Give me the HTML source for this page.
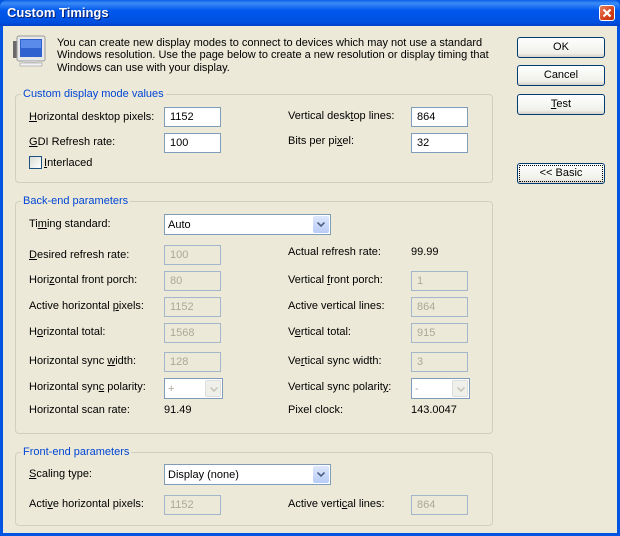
<!DOCTYPE html>
<html><head><meta charset="utf-8"><style>
*{margin:0;padding:0;box-sizing:border-box}
body{width:620px;height:536px;overflow:hidden;background:#0054E3;font-family:"Liberation Sans",Tahoma,sans-serif;font-size:11px;color:#000;position:relative}
.title{position:absolute;left:0;top:0;width:620px;height:26px;background:linear-gradient(#0A5FE8 0%,#3B8CF7 12%,#0058EE 40%,#0050E0 85%,#0040C8 100%);border-radius:7px 7px 0 0}
.title span{position:absolute;left:7px;top:5px;color:#fff;font-weight:bold;font-size:13px;text-shadow:1px 1px #0a1f6b}
.close{position:absolute;left:599px;top:5px;width:16px;height:16px;border:1px solid #fff;border-radius:3px;background:linear-gradient(135deg,#E8805A,#D4401C 60%,#C0300E)}
.close svg{position:absolute;left:2px;top:2px}
.client{position:absolute;left:3px;top:26px;width:614px;height:507px;background:#ECE9D8}
.a{position:absolute;white-space:nowrap;line-height:13px}
.grp{position:absolute;border:1px solid #D0D0BF;border-radius:4px}
.leg{position:absolute;color:#0046D5;background:#ECE9D8;padding:0 2px;line-height:13px}
.in{position:absolute;width:57px;height:20px;border:1px solid #7F9DB9;background:#fff;padding:3px 0 0 5px;line-height:13px}
.dis{background:#ECE9D8;color:#ACA899;border-color:#A4B6C9}
.sel{position:absolute;height:21px;border:1px solid #7F9DB9;background:#fff;padding:4px 0 0 3px;line-height:13px}
.arr{position:absolute;right:1px;top:1px;width:16px;height:17px;background:linear-gradient(#DDE8FD,#B9CCF7);border-radius:2px}
.arr svg{position:absolute;left:4px;top:6px}
.btn{position:absolute;left:517px;width:88px;height:21px;border:1px solid #003C74;border-radius:3px;background:linear-gradient(#FFFFFF,#F0F0EA 80%,#D6D0C5);text-align:center;line-height:19px}
u{text-decoration:underline}
</style></head><body>
<div class="title"><span>Custom Timings</span>
<div class="close"><svg width="10" height="10" viewBox="0 0 10 10"><path d="M1.5 1.5L8.5 8.5M8.5 1.5L1.5 8.5" stroke="#fff" stroke-width="2.2"/></svg></div></div>
<div class="client"></div>
<!-- monitor icon -->
<svg style="position:absolute;left:12px;top:34px" width="36" height="34" viewBox="0 0 36 34">
<rect x="1" y="7" width="6" height="17" fill="#6a6a6a" />
<rect x="5" y="2" width="28" height="25" rx="2" fill="#E8E8E8" stroke="#9a9a9a"/>
<rect x="8" y="5" width="22" height="18" fill="#2F62CF"/>
<rect x="9" y="6" width="20" height="8" fill="#5A8BEA"/>
<rect x="12" y="27" width="14" height="2" fill="#CFCFCF"/>
<rect x="8" y="29" width="22" height="3" fill="#F2F2F2" stroke="#999" stroke-width=".6"/>
</svg>
<div class="a" style="left:57px;top:37px">You can create new display modes to connect to devices which may not use a standard</div>
<div class="a" style="left:57px;top:49px">Windows resolution. Use the page below to create a new resolution or display timing that</div>
<div class="a" style="left:57px;top:62px">Windows can use with your display.</div>

<div class="btn" style="top:37px">OK</div>
<div class="btn" style="top:65px">Cancel</div>
<div class="btn" style="top:94px"><u>T</u>est</div>
<div class="btn" style="top:163px;outline:1px dotted #000;outline-offset:-3px">&lt;&lt; Basic</div>

<div class="grp" style="left:15px;top:94px;width:478px;height:89px"></div>
<div class="leg" style="left:21px;top:88px">Custom display mode values</div>
<div class="a" style="left:29px;top:111px"><u>H</u>orizontal desktop pixels:</div>
<div class="in" style="left:164px;top:107px">1152</div>
<div class="a" style="left:288px;top:110px">Vertical desk<u>t</u>op lines:</div>
<div class="in" style="left:411px;top:107px">864</div>
<div class="a" style="left:29px;top:136px"><u>G</u>DI Refresh rate:</div>
<div class="in" style="left:164px;top:133px">100</div>
<div class="a" style="left:288px;top:135px">Bits per pi<u>x</u>el:</div>
<div class="in" style="left:411px;top:133px">32</div>
<div style="position:absolute;left:29px;top:156px;width:13px;height:13px;border:1px solid #1C5180;background:linear-gradient(135deg,#DCDCD5,#fff)"></div>
<div class="a" style="left:44px;top:157px"><u>I</u>nterlaced</div>

<div class="grp" style="left:15px;top:201px;width:478px;height:233px"></div>
<div class="leg" style="left:21px;top:195px">Back-end parameters</div>
<div class="a" style="left:29px;top:218px">Ti<u>m</u>ing standard:</div>
<div class="sel" style="left:164px;top:214px;width:167px">Auto<div class="arr"><svg width="8" height="5"><path d="M0.5 0.5L4 4L7.5 0.5" stroke="#4D6185" stroke-width="1.6" fill="none"/></svg></div></div>

<div class="a" style="left:29px;top:249px"><u>D</u>esired refresh rate:</div>
<div class="in dis" style="left:164px;top:245px">100</div>
<div class="a" style="left:288px;top:246px">Actual refresh rate:</div>
<div class="a" style="left:411px;top:246px">99.99</div>

<div class="a" style="left:29px;top:274px">Hori<u>z</u>ontal front porch:</div>
<div class="in dis" style="left:164px;top:271px">80</div>
<div class="a" style="left:288px;top:274px">Vertical <u>f</u>ront porch:</div>
<div class="in dis" style="left:411px;top:271px">1</div>

<div class="a" style="left:29px;top:300px">Active horizontal <u>p</u>ixels:</div>
<div class="in dis" style="left:164px;top:297px">1152</div>
<div class="a" style="left:288px;top:300px">Active vertical lines:</div>
<div class="in dis" style="left:411px;top:297px">864</div>

<div class="a" style="left:29px;top:326px">H<u>o</u>rizontal total:</div>
<div class="in dis" style="left:164px;top:323px">1568</div>
<div class="a" style="left:288px;top:326px">V<u>e</u>rtical total:</div>
<div class="in dis" style="left:411px;top:323px">915</div>

<div class="a" style="left:29px;top:355px">Horizontal sync <u>w</u>idth:</div>
<div class="in dis" style="left:164px;top:352px">128</div>
<div class="a" style="left:288px;top:355px">Ve<u>r</u>tical sync width:</div>
<div class="in dis" style="left:411px;top:352px">3</div>

<div class="a" style="left:29px;top:381px">Horizontal syn<u>c</u> polarity:</div>
<div class="sel dis" style="left:164px;top:378px;width:59px;color:#ACA899">+<div class="arr" style="background:#F0F0EA;border:1px solid #DDD"><svg width="8" height="5"><path d="M0.5 0.5L4 4L7.5 0.5" stroke="#C9C7BA" stroke-width="1.6" fill="none"/></svg></div></div>
<div class="a" style="left:288px;top:381px">Vertical sync polarit<u>y</u>:</div>
<div class="sel dis" style="left:411px;top:378px;width:59px;color:#ACA899">-<div class="arr" style="background:#F0F0EA;border:1px solid #DDD"><svg width="8" height="5"><path d="M0.5 0.5L4 4L7.5 0.5" stroke="#C9C7BA" stroke-width="1.6" fill="none"/></svg></div></div>

<div class="a" style="left:29px;top:404px">Horizontal scan rate:</div>
<div class="a" style="left:164px;top:404px">91.49</div>
<div class="a" style="left:288px;top:404px">Pixel clock:</div>
<div class="a" style="left:411px;top:404px">143.0047</div>

<div class="grp" style="left:15px;top:452px;width:478px;height:74px"></div>
<div class="leg" style="left:21px;top:446px">Front-end parameters</div>
<div class="a" style="left:29px;top:468px"><u>S</u>caling type:</div>
<div class="sel" style="left:164px;top:464px;width:167px">Display (none)<div class="arr"><svg width="8" height="5"><path d="M0.5 0.5L4 4L7.5 0.5" stroke="#4D6185" stroke-width="1.6" fill="none"/></svg></div></div>
<div class="a" style="left:29px;top:498px">Acti<u>v</u>e horizontal pixels:</div>
<div class="in dis" style="left:164px;top:495px">1152</div>
<div class="a" style="left:288px;top:498px">Active verti<u>c</u>al lines:</div>
<div class="in dis" style="left:411px;top:495px">864</div>
</body></html>
